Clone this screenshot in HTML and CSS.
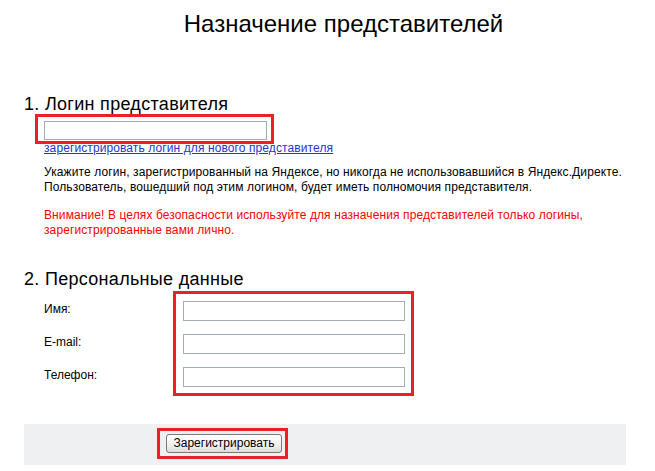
FILE: index.html
```html
<!DOCTYPE html>
<html>
<head>
  <title>Назначение представителей</title>
  <link rel="stylesheet" href="styles.css">
</head>
<body>

<h1 class="title">Назначение представителей</h1>

<div class="page">

  <h2 class="step">1. Логин представителя</h2>
  <div class="mark mark-login">
    <input type="text" class="field field-login" name="login">
  </div>
  <a href="#" class="reg-link">зарегистрировать логин для нового представителя</a>

  <p class="note">Укажите логин, зарегистрированный на Яндексе, но никогда не использовавшийся в Яндекс.Директе.<br>
  Пользователь, вошедший под этим логином, будет иметь полномочия представителя.</p>
  <p class="note warn">Внимание! В целях безопасности используйте для назначения представителей только логины,<br>
  зарегистрированные вами лично.</p>

  <h2 class="step step-personal">2. Персональные данные</h2>
  <div class="personal">
    <div class="labels">
      <label for="name">Имя:</label>
      <label for="email">E-mail:</label>
      <label for="phone">Телефон:</label>
    </div>
    <div class="mark mark-fields">
      <input type="text" class="field" id="name" name="name">
      <input type="text" class="field" id="email" name="email">
      <input type="text" class="field" id="phone" name="phone">
    </div>
  </div>

  <div class="submit-bar">
    <div class="mark mark-button">
      <button type="button" class="btn">Зарегистрировать</button>
    </div>
  </div>

</div>

</body>
</html>
```

FILE: styles.css
```css
body {
  margin: 0;
  background-color: #fff;
  color: #000;
  font-family: "Liberation Sans", Arial, sans-serif;
  font-size: 12px;
}

.title {
  margin: 10px 0 0;
  padding-left: 32px;
  font-size: 24px;
  line-height: 28px;
  font-weight: normal;
  text-align: center;
}

.page {
  width: 602px;
  padding-left: 24px;
}

.step {
  margin: 57px 0 0;
  font-size: 18px;
  line-height: 19px;
  font-weight: normal;
  letter-spacing: 0.3px;
}

.step-personal {
  margin-top: 32px;
}

/* red highlight frames */
.mark {
  border: 3px solid #e8202a;
  box-sizing: border-box;
}

.mark-login {
  display: inline-block;
  vertical-align: top;
  margin-left: 11px;
  padding: 4px 4px 1px 6px;
}

.field {
  display: block;
  box-sizing: border-box;
  width: 222px;
  height: 20px;
  margin: 0;
  padding: 1px 3px;
  border: 1px solid #a5acb2;
  background: #fff;
  font-family: inherit;
  font-size: 12px;
}

.field-login {
  width: 223px;
  height: 19px;
}

.reg-link {
  display: block;
  width: max-content;
  margin: -2px 0 0 20px;
  line-height: 12px;
  color: #2337c9;
  text-decoration: underline;
  letter-spacing: 0.1px;
}

.note {
  margin: 11px 0 0 20px;
  line-height: 15px;
  letter-spacing: 0.1px;
}

.warn {
  margin-top: 13px;
  color: #ff0000;
}

.personal {
  display: flex;
  margin-top: 2px;
}

.labels {
  display: flex;
  flex-direction: column;
  gap: 13px;
  width: 129px;
  margin-left: 20px;
  padding-top: 8px;
}

.labels label {
  line-height: 20px;
}

.mark-fields {
  display: flex;
  flex-direction: column;
  gap: 13px;
  padding: 7px 6px 6px 7px;
}

.submit-bar {
  margin-top: 28px;
  padding: 4px 0 6px 133px;
  background-color: #eff0f2;
}

.mark-button {
  display: inline-block;
  vertical-align: top;
  padding: 3px 3px 3px 6px;
}

.btn {
  display: block;
  box-sizing: border-box;
  width: 116px;
  height: 19px;
  padding: 0;
  border: 1px solid #7a7a7a;
  border-radius: 3px;
  background: linear-gradient(#ffffff, #f2f2f0 55%, #dcdcd8);
  color: #000;
  font-family: inherit;
  font-size: 12px;
  line-height: 17px;
  cursor: pointer;
}
```
